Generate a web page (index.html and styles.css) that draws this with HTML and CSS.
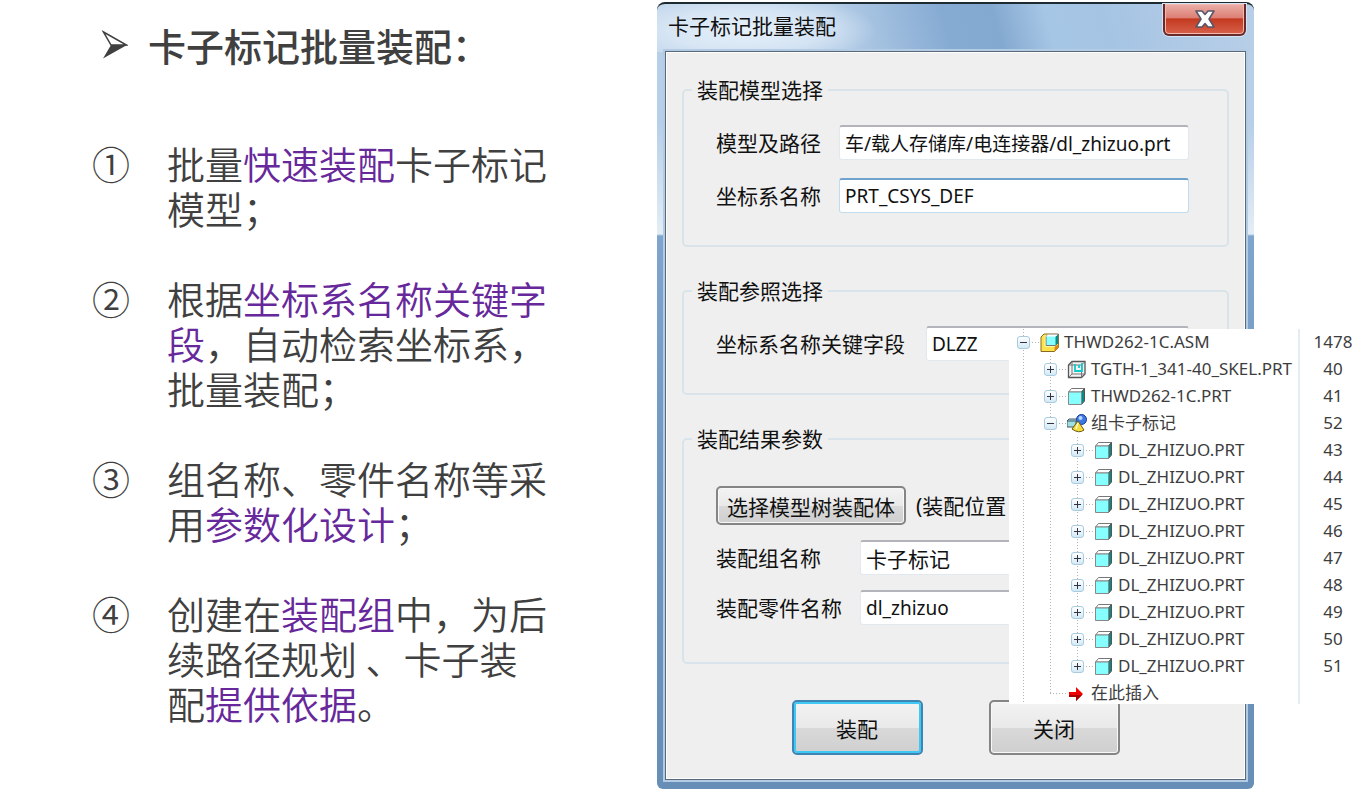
FILE: index.html
```html
<!DOCTYPE html>
<html lang="zh-CN">
<head>
  <meta charset="UTF-8">
  <title>卡子标记批量装配</title>
  <link rel="stylesheet" href="styles.css">
</head>
<body>
  <svg width="0" height="0" class="sprite" aria-hidden="true">
    <symbol id="part" viewBox="0 0 20 20">
      <path d="M1.500 5L4.500 1.500H17.500L14.500 5Z" fill="#fff" stroke="#777" />
      <path d="M14.500 5L17.500 1.500V14L14.500 17.500Z" fill="#088a86" stroke="#555" />
      <path d="M1.500 5H14.500V17.500H1.500Z" fill="#8ff" stroke="#888" />
    </symbol>
    <symbol id="asm" viewBox="0 0 20 20">
      <path d="M1 4L4 1H18.500V14.500L14.500 18.500H1Z" fill="#ffe34d" stroke="#8a6a20" />
      <path d="M14.500 14L18.500 11V14.500L14.500 18.500Z" fill="#d98a12" />
      <path d="M6 3.500L8 1.500H18V10L15.500 12.500H6Z" fill="#8ff" stroke="#777" />
      <path d="M15.500 3.500L18 1.500V10L15.500 12.500Z" fill="#088a86" />
      <path d="M6 3.500L8 1.500H18L15.500 3.500Z" fill="#fff" />
      <path d="M5 2V13.500H15" fill="none" stroke="#fff5a8" />
    </symbol>
    <symbol id="skel" viewBox="0 0 20 20">
      <path d="M1.500 5L5 1.500H18V14L14.500 17.500H1.500Z" fill="#f4f4f4" stroke="#555" stroke-width="1.300" />
      <path d="M1.500 5H14.500V17.500M14.500 5L18 1.500M5 1.500V14H18M5 14L1.500 17.500" fill="none" stroke="#777" />
      <path d="M8 4V11H15V3M12 5V8" fill="none" stroke="#1cc" stroke-width="1.800" />
    </symbol>
    <symbol id="group" viewBox="0 0 20 20">
      <path d="M0 7L2 5H11V11L9 13H0Z" fill="#9edfe0" stroke="#456" />
      <path d="M0 7H9V13" fill="none" stroke="#456" />
      <circle cx="14.500" cy="5.500" r="5" fill="#3c78e0" stroke="#123a9c" />
      <circle cx="13.500" cy="4" r="2" fill="#b9d6ff" />
      <path d="M11 7L17 16Q12 20 5 15Z" fill="#f3dc3c" stroke="#6a5a10" />
      <path d="M11 9L9 15" stroke="#fffbd0" stroke-width="1.500" />
    </symbol>
    <symbol id="insert" viewBox="0 0 20 20">
      <path d="M2 8H9V3L16 10L9 17V13H2Z" fill="#f00000" />
      <path d="M2 11H15L9 17V13H2Z" fill="#a80000" />
    </symbol>
  </svg>

  <main class="slide">
    <section class="notes">
      <h1>
        <svg class="bullet" viewBox="0 0 26 30" aria-hidden="true">
          <path d="M1.500 2L24.500 15L9 15Z" fill="none" stroke="#404040" stroke-width="1.500" />
          <path d="M9 15H25L1 28.500Z" fill="#404040" />
        </svg>
        卡子标记批量装配：
      </h1>
      <ul class="points">
        <li><span class="num">①</span><p>批量<em>快速装配</em>卡子标记模型；</p></li>
        <li><span class="num">②</span><p>根据<em>坐标系名称关键字段</em>，自动检索坐标系，批量装配；</p></li>
        <li><span class="num">③</span><p>组名称、零件名称等采用<em>参数化设计</em>；</p></li>
        <li><span class="num">④</span><p>创建在<em>装配组</em>中，为后续路径规划 、卡子装配<em>提供依据</em>。</p></li>
      </ul>
    </section>

    <section class="dialog">
      <header class="titlebar">
        <h2>卡子标记批量装配</h2>
        <button class="close" type="button" aria-label="关闭窗口">
          <svg width="20" height="18" viewBox="0 0 20 18">
            <path d="M1 1H7L10 4.500L13 1H19L14 9L19 17H13L10 13.500L7 17H1L6 9Z" fill="#fff" stroke="#55556a" stroke-width="1.500" stroke-linejoin="round" />
          </svg>
        </button>
      </header>
      <form class="client">
        <fieldset class="group model">
          <legend>装配模型选择</legend>
          <div class="row">
            <label for="path">模型及路径</label>
            <input id="path" type="text" value="车/载人存储库/电连接器/dl_zhizuo.prt">
          </div>
          <div class="row">
            <label for="csys">坐标系名称</label>
            <input id="csys" class="active" type="text" value="PRT_CSYS_DEF">
          </div>
        </fieldset>
        <fieldset class="group refs">
          <legend>装配参照选择</legend>
          <div class="row">
            <label for="key">坐标系名称关键字段</label>
            <input id="key" type="text" value="DLZZ">
          </div>
        </fieldset>
        <fieldset class="group result">
          <legend>装配结果参数</legend>
          <div class="row">
            <button class="btn pick" type="button">选择模型树装配体</button>
            <span>(装配位置</span>
          </div>
          <div class="row">
            <label for="gname">装配组名称</label>
            <input id="gname" class="cjk" type="text" value="卡子标记">
          </div>
          <div class="row">
            <label for="pname">装配零件名称</label>
            <input id="pname" type="text" value="dl_zhizuo">
          </div>
        </fieldset>
        <div class="actions">
          <button class="btn default" type="button">装配</button>
          <button class="btn" type="button">关闭</button>
        </div>
      </form>
    </section>

    <aside class="tree">
      <table>
        <tbody id="rows"></tbody>
      </table>
    </aside>
  </main>
  <script src="tree.js"></script>
</body>
</html>
```
FILE: styles.css
```css
:root {
  --ink: #404040;
  --purple: #66289a;
  --face: #efefef;
  --line: #d8e4ea;
  --dots: #b4b4b4;
  --cjk: "Noto Sans CJK SC";
}
* {
  box-sizing: border-box;
}
body {
  margin: 0;
  background: #fff;
  font-family: "Noto Sans", var(--cjk), sans-serif;
}
.sprite {
  position: absolute;
}
.slide {
  position: relative;
  display: grid;
  grid-template-columns: minmax(0, 657fr) minmax(0, 597fr) minmax(0, 106fr);
  align-items: start;
  padding-top: 2px;
}

/* left column */
.notes {
  padding: 20px 0 0 92px;
  font-family: var(--cjk), sans-serif;
  font-size: 38px;
  line-height: 45px;
  color: var(--ink);
}
.notes h1 {
  display: flex;
  align-items: center;
  margin: 0 0 73px;
  font-size: 38px;
  font-weight: 500;
}
.bullet {
  width: 26px;
  height: 30px;
  margin: 0 20px 0 10px;
}
.points {
  margin: 0;
  padding: 0;
  list-style: none;
}
.points li {
  display: flex;
  margin-bottom: 45px;
  font-weight: 350;
}
.num {
  flex: none;
  width: 75px;
}
.points p {
  width: 388px;
  margin: 0;
}
.points em {
  font-style: normal;
  color: var(--purple);
}

/* dialog window */
.dialog {
  padding: 0 8px 9px;
  border-top: 2px solid #1c2b30;
  border-radius: 8px 8px 6px 6px;
  font-size: 21px;
  line-height: 24px;
  color: #111;
  background:
    radial-gradient(ellipse 130px 36px at 90px 26px, #e6f0fa 0, #e6f0fa99 60%, #e6f0fa00 100%) 0 0 / 100% 48px no-repeat,
    linear-gradient(75deg, #c3d7ec 0, #b4cde7 180px, #86abd3 285px, #84a9d0 335px, #a6c6e5 385px, #a5c4e3 440px, #b9cfe8 100%) 0 0 / 100% 48px no-repeat,
    linear-gradient(#b7cfe7 0, #b7cfe8 120px, #e3edf6 230px, #7fa5ce 232px, #7299c3 450px, #678eb7 100%);
}
.titlebar {
  display: flex;
  justify-content: space-between;
  height: 47px;
}
.titlebar h2 {
  margin: 0;
  padding: 10px 0 0 3px;
  font-size: 21px;
  font-weight: 400;
}
.close {
  display: flex;
  align-items: center;
  justify-content: center;
  width: 83px;
  height: 32px;
  padding: 0;
  border: 2px solid #6b2a2a;
  border-top: 0;
  border-radius: 0 0 6px 6px;
  background: linear-gradient(#eab0a8, #dd8076 45%, #c33a20 50%, #d8604a);
  box-shadow: inset 0 0 0 1px #f3b9ae, 0 0 0 1px #d5e4f2;
}
.client {
  padding: 26px 16px 24px;
  border: 1px solid #5a6979;
  background: var(--face);
  box-shadow: 0 0 0 2px #b4cce3, inset 0 0 0 1px #fff;
}
.group {
  min-width: 0;
  margin: 0 0 32px;
  padding: 23px 38px 32px 32px;
  border: 2px solid var(--line);
  border-radius: 5px;
}
.group legend {
  margin-left: -24px;
  padding: 0 5px;
}
.row {
  display: flex;
  align-items: center;
  white-space: nowrap;
}
.row + .row {
  margin-top: 18px;
}
.row input {
  flex: 1;
  min-width: 0;
  height: 35px;
  padding: 0 5px;
  border: 1px solid #e1e8ee;
  border-top: 2px solid #b3b3ba;
  border-radius: 3px;
  background: #fff;
  font-family: inherit;
  font-size: 19px;
  color: #111;
}
.row input.cjk {
  font-size: 21px;
}
.row input.active {
  border-color: #6fa3cd #c3dced #c3dced;
}
.row label {
  flex: none;
}
.model label {
  width: 123px;
}
.refs label {
  width: 210px;
}
.result label {
  width: 144px;
}
.result {
  margin-bottom: 36px;
  padding-top: 35px;
  padding-bottom: 37px;
}
.result .row + .row {
  margin-top: 15px;
}
.btn {
  width: 131px;
  height: 55px;
  padding: 0;
  border: 2px solid #858585;
  border-radius: 5px;
  background: linear-gradient(#f3f3f3, #e9e9e9 50%, #d9d9d9 51%, #cfcfcf);
  box-shadow: inset 0 0 0 1px #f8f8f8;
  font-family: inherit;
  font-size: 21px;
  color: #111;
}
.btn.default {
  border-color: #3e85b4;
  box-shadow: inset 0 0 0 2px #3fc8f3;
}
.btn.pick {
  width: 190px;
  height: 39px;
  margin-right: 10px;
}
.actions {
  display: flex;
  justify-content: center;
  gap: 66px;
}

/* model tree laid over the dialog */
.tree {
  position: absolute;
  top: 329px;
  right: 0;
  width: 351px;
  height: 375px;
  overflow: hidden;
  background: #fff;
  font-size: 17px;
  line-height: 25px;
  color: #3d3d3d;
}
.tree table {
  width: 100%;
  border-collapse: collapse;
}
.tree td {
  height: 27px;
  padding: 0;
}
.tree .count {
  width: 61px;
  padding: 0 0 2px 6px;
  border-left: 2px solid #e1ecf4;
  text-align: center;
}
.node {
  display: flex;
  align-items: center;
  height: 27px;
  white-space: nowrap;
}
.node .name {
  padding-bottom: 2px;
}
.node .icon {
  width: 20px;
  height: 20px;
  margin-right: 4px;
}
.guide {
  display: flex;
  flex: none;
  align-items: center;
  width: 27px;
  height: 27px;
  background: repeating-linear-gradient(var(--dots) 0 1px, transparent 1px 3px) 14px 0 / 1px 100% no-repeat;
}
.guide.branch {
  width: 31px;
  padding-left: 8px;
  background:
    repeating-linear-gradient(var(--dots) 0 1px, transparent 1px 3px) 14px 0 / 1px 100% no-repeat,
    repeating-linear-gradient(90deg, var(--dots) 0 1px, transparent 1px 3px) 14px 13px / 17px 1px no-repeat;
}
.guide.branch.last {
  background-size: 1px 50%, 17px 1px;
}
.toggle {
  width: 13px;
  height: 13px;
  padding: 0;
  border: 1px solid #a9cbe0;
  border-radius: 3px;
  background:
    linear-gradient(#334, #334) center / 7px 1px no-repeat,
    linear-gradient(#fff, #d4e9f5);
}
.toggle.plus {
  background:
    linear-gradient(#334, #334) center / 7px 1px no-repeat,
    linear-gradient(#334, #334) center / 1px 7px no-repeat,
    linear-gradient(#fff, #d4e9f5);
}
```
FILE: tree.js
```js
const rows = [
  { level: 0, icon: 'asm', name: 'THWD262-1C.ASM', count: 1478, open: true },
  { level: 1, icon: 'skel', name: 'TGTH-1_341-40_SKEL.PRT', count: 40 },
  { level: 1, icon: 'part', name: 'THWD262-1C.PRT', count: 41 },
  { level: 1, icon: 'group', name: '组卡子标记', count: 52, open: true }
];
for (let n = 43; n <= 51; n++) {
  rows.push({ level: 2, icon: 'part', name: 'DL_ZHIZUO.PRT', count: n, last: n === 51 });
}
rows.push({ level: 1, icon: 'insert', name: '在此插入', count: '', leaf: true, last: true });

document.getElementById('rows').innerHTML = rows.map(row => {
  const guides = '<span class="guide"></span>'.repeat(row.level);
  const toggle = row.leaf ? '' :
    `<button class="toggle${row.open ? '' : ' plus'}" type="button" aria-label="${row.open ? '折叠' : '展开'}"></button>`;
  return `<tr>
    <td><div class="node">${guides}<span class="guide branch${row.last ? ' last' : ''}">${toggle}</span>
      <svg class="icon"><use href="#${row.icon}"/></svg><span class="name">${row.name}</span></div></td>
    <td class="count">${row.count}</td>
  </tr>`;
}).join('');
```
